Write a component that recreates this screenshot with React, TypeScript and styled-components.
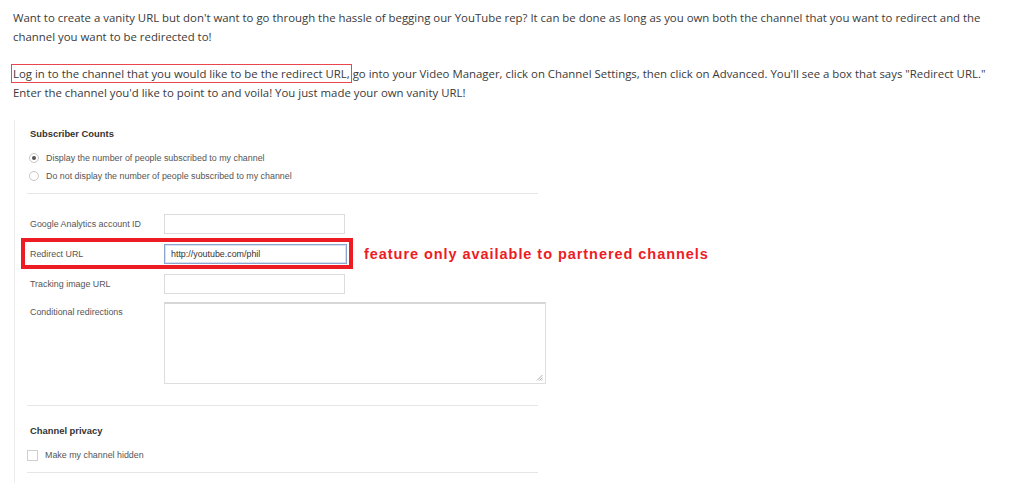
import React from 'react'
import styled, { createGlobalStyle } from 'styled-components'

const GlobalStyle = createGlobalStyle`
  html, body {
    margin: 0;
    padding: 0;
    background: #ffffff;
  }
`

const Page = styled.div`
  width: 1024px;
  height: 483px;
  overflow: hidden;
  background: #fff;
`

const Article = styled.div`
  padding: 8px 0 0 13px;
  font-family: 'Open Sans', 'Liberation Sans', sans-serif;
  font-size: 11.4px;
  line-height: 19px;
  color: #3a3a3a;
  width: 1000px;
`

const Para = styled.p`
  margin: 0 0 18px 0;
`

const Boxed = styled.span`
  outline: 1px solid #e8474f;
  outline-offset: 1px;
`

const Shot = styled.div`
  margin: 14px 0 0 14px;
  border-left: 1px solid #ececec;
  padding: 8px 0 0 12px;
  height: 400px;
  font-family: 'Liberation Sans', Arial, sans-serif;
  font-size: 8.9px;
  color: #444;
`

const Section = styled.div<{ pad?: string }>`
  width: 511px;
  border-bottom: 1px solid #e6e6e6;
  padding: ${props => props.pad || '0'};
`

const Heading = styled.div`
  font-weight: bold;
  font-size: 9.4px;
  color: #333;
  padding-left: 3px;
  margin-bottom: 10px;
`

const OptionRow = styled.label<{ indent?: number }>`
  display: flex;
  align-items: center;
  gap: 7px;
  height: 18px;
  padding-left: ${props => (props.indent ?? 2)}px;
  color: #555;
`

const Radio = styled.span<{ checked?: boolean }>`
  width: 10px;
  height: 10px;
  border-radius: 50%;
  border: 1px solid #c8c8c8;
  box-sizing: border-box;
  display: flex;
  align-items: center;
  justify-content: center;
  background: #fff;
  &::after {
    content: '';
    width: 4px;
    height: 4px;
    border-radius: 50%;
    background: ${props => (props.checked ? '#555' : 'transparent')};
  }
`

const Checkbox = styled.span`
  width: 11px;
  height: 11px;
  border: 1px solid #cfcfcf;
  box-sizing: border-box;
  background: #fff;
`

const FieldRow = styled.div<{ h?: number }>`
  display: flex;
  align-items: flex-start;
  position: relative;
  height: ${props => (props.h ? `${props.h}px` : 'auto')};
`

const HighlightBox = styled.div`
  position: absolute;
  left: -6px;
  top: -6px;
  width: 332px;
  height: 31px;
  border: 4px solid #ed1c24;
  box-sizing: border-box;
  pointer-events: none;
`

const Note = styled.div`
  position: absolute;
  left: 337px;
  top: 2px;
  white-space: nowrap;
  font-family: 'Liberation Sans', Arial, sans-serif;
  font-weight: bold;
  font-size: 14.5px;
  letter-spacing: 0.95px;
  color: #ed1c24;
`

const Label = styled.div`
  width: 134px;
  padding-left: 3px;
  padding-top: 5px;
  flex-shrink: 0;
  color: #555;
`

const TextInput = styled.div<{ focused?: boolean; wide?: boolean }>`
  width: ${props => (props.wide ? '183px' : '181px')};
  height: 20px;
  flex-shrink: 0;
  box-sizing: border-box;
  border: 1px solid ${props => (props.focused ? '#8aa6cf' : '#dcdcdc')};
  box-shadow: ${props => (props.focused ? 'inset 0 0 0 1px #d7e1f0' : 'none')};
  padding: 4px 6px;
  color: #333;
  font-size: 8.9px;
  background: #fff;
`

const TextArea = styled.div`
  width: 382px;
  height: 82px;
  flex-shrink: 0;
  box-sizing: border-box;
  border: 1px solid #dedede;
  border-top: 2px solid #d6d6d6;
  position: relative;
  background: #fff;
`

const Grip = styled.svg`
  position: absolute;
  right: 2px;
  bottom: 2px;
`

export default function App() {
  return (
    <Page>
      <GlobalStyle />
      <Article>
        <Para>
          Want to create a vanity URL but don't want to go through the hassle of begging our YouTube rep? It can be done as long as you own both the channel that you want to redirect and the channel you want to be redirected to!
        </Para>
        <Para>
          <Boxed>Log in to the channel that you would like to be the redirect URL,</Boxed> go into your Video Manager, click on Channel Settings, then click on Advanced. You'll see a box that says "Redirect URL." Enter the channel you'd like to point to and voila! You just made your own vanity URL!
        </Para>
      </Article>
      <Shot>
        <Section pad="0 0 8px 0">
          <Heading>Subscriber Counts</Heading>
          <OptionRow>
            <Radio checked />
            Display the number of people subscribed to my channel
          </OptionRow>
          <OptionRow>
            <Radio />
            Do not display the number of people subscribed to my channel
          </OptionRow>
        </Section>
        <Section pad="20px 0 21px 0">
          <FieldRow h={30}>
            <Label>Google Analytics account ID</Label>
            <TextInput />
          </FieldRow>
          <FieldRow h={30}>
            <HighlightBox />
            <Label>Redirect URL</Label>
            <TextInput focused wide>http://youtube.com/phil</TextInput>
            <Note>feature only available to partnered channels</Note>
          </FieldRow>
          <FieldRow h={28}>
            <Label>Tracking image URL</Label>
            <TextInput />
          </FieldRow>
          <FieldRow>
            <Label>Conditional redirections</Label>
            <TextArea>
              <Grip width="7" height="7" viewBox="0 0 7 7">
                <path d="M6.5 1 L1 6.5 M6.5 3.5 L3.5 6.5 M6.5 5.5 L5.5 6.5" stroke="#9a9a9a" strokeWidth="0.8" />
              </Grip>
            </TextArea>
          </FieldRow>
        </Section>
        <Section pad="19px 0 8px 0">
          <Heading>Channel privacy</Heading>
          <OptionRow indent={0}>
            <Checkbox />
            Make my channel hidden
          </OptionRow>
        </Section>
      </Shot>
    </Page>
  )
}
